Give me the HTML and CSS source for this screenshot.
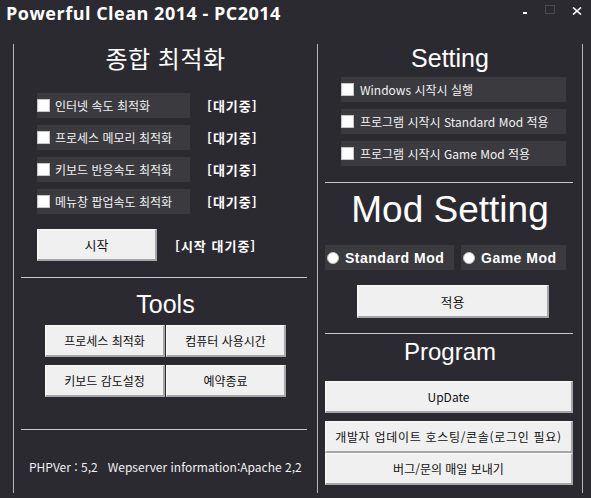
FILE: index.html
```html
<!DOCTYPE html>
<html lang="ko">
<head>
<meta charset="utf-8">
<title>Powerful Clean 2014 - PC2014</title>
<link rel="stylesheet" href="styles.css">
</head>
<body>
<div class="window">
  <header class="titlebar">
    <div class="title">Powerful Clean 2014 - PC2014</div>
    <div class="controls">
      <span class="ctl-min"></span>
      <span class="ctl-max"></span>
      <svg class="ctl-close" width="10" height="8" viewBox="0 0 10 8"><path d="M1 0.5 L9 7.5 M9 0.5 L1 7.5" stroke="#ffffff" stroke-width="1.6" fill="none"/></svg>
    </div>
  </header>
  <div class="main">
    <section class="panel panel-left">
      <h1 class="kheading">종합 최적화</h1>
      <div class="opt-list">
        <div class="opt"><div class="chk-row w-left"><span class="box"></span><span>인터넷 속도 최적화</span></div><span class="status">[대기중]</span></div>
        <div class="opt"><div class="chk-row w-left"><span class="box"></span><span>프로세스 메모리 최적화</span></div><span class="status">[대기중]</span></div>
        <div class="opt"><div class="chk-row w-left"><span class="box"></span><span>키보드 반응속도 최적화</span></div><span class="status">[대기중]</span></div>
        <div class="opt"><div class="chk-row w-left"><span class="box"></span><span>메뉴창 팝업속도 최적화</span></div><span class="status">[대기중]</span></div>
      </div>
      <div class="start-row"><div class="btn btn-start">시작</div><span class="status status-start">[시작 대기중]</span></div>
      <div class="sep sep-left"></div>
      <h2 class="heading h-tools">Tools</h2>
      <div class="tools-grid">
        <div class="btn">프로세스 최적화</div>
        <div class="btn">컴퓨터 사용시간</div>
        <div class="btn">키보드 감도설정</div>
        <div class="btn">예약종료</div>
      </div>
      <div class="sep sep-left sep-bottom"></div>
      <p class="info">PHPVer : 5,2 &nbsp;&nbsp;Wepserver information:Apache 2,2</p>
    </section>
    <section class="panel panel-right">
      <h2 class="heading h-setting">Setting</h2>
      <div class="set-list">
        <div class="chk-row w-right"><span class="box box-r"></span><span>Windows 시작시 실행</span></div>
        <div class="chk-row w-right"><span class="box box-r"></span><span>프로그램 시작시 Standard Mod 적용</span></div>
        <div class="chk-row w-right"><span class="box box-r"></span><span>프로그램 시작시 Game Mod 적용</span></div>
      </div>
      <div class="sep sep-right"></div>
      <h2 class="heading h-mod">Mod Setting</h2>
      <div class="radios">
        <div class="radio-row r-standard"><span class="dot"></span><span>Standard Mod</span></div>
        <div class="radio-row r-game"><span class="dot"></span><span>Game Mod</span></div>
      </div>
      <div class="btn btn-apply">적용</div>
      <div class="sep sep-right sep-prog"></div>
      <h2 class="heading h-prog">Program</h2>
      <div class="prog-btns">
        <div class="btn btn-wide">UpDate</div>
        <div class="btn btn-wide btn-dev">개발자 업데이트 호스팅/콘솔(로그인 필요)</div>
        <div class="btn btn-wide">버그/문의 매일 보내기</div>
      </div>
    </section>
  </div>
</div>
</body>
</html>
```
FILE: styles.css
```css
* { box-sizing: border-box; }
html, body { margin: 0; padding: 0; }
body {
  width: 591px;
  height: 498px;
  background: #2b2a30;
  font-family: "Noto Sans CJK KR", "Noto Sans", sans-serif;
  color: #f2f2f2;
  overflow: hidden;
}
.window { width: 591px; height: 498px; }

.titlebar {
  height: 44px;
  display: flex;
  align-items: flex-start;
}
.title {
  margin: 2px 0 0 6px;
  font-family: "Open Sans", "Noto Sans", sans-serif;
  font-weight: 700;
  font-size: 18px;
  line-height: 22px;
  letter-spacing: 0.5px;
  color: #ffffff;
}
.controls {
  margin-left: auto;
  margin-right: 9px;
  padding-top: 5px;
  display: flex;
  align-items: flex-start;
}
.ctl-min { width: 4px; height: 2px; background: #ffffff; margin-top: 7px; }
.ctl-max { width: 10px; height: 9px; border: 1px solid #4a4a50; margin-left: 18px; }
.ctl-close { margin-left: 17px; margin-top: 2px; display: block; }

.main { display: flex; height: 449px; }
.panel { height: 449px; }
.panel-left {
  margin-left: 13px;
  width: 304px;
  border-left: 1px solid #b4b4b4;
}
.panel-right {
  width: 266px;
  border-left: 1px solid #b4b4b4;
  border-right: 1px solid #b4b4b4;
}

.kheading {
  margin: 0;
  height: 28px;
  line-height: 28px;
  font-size: 24px;
  font-weight: 400;
  letter-spacing: 0.5px;
  text-align: center;
  color: #ffffff;
}
.heading {
  margin: 0;
  font-family: "Liberation Sans", Arial, sans-serif;
  font-weight: 400;
  text-align: center;
  color: #ffffff;
}
.h-tools { font-size: 25px; line-height: 30px; margin-top: 11px; }
.h-setting { font-size: 25px; line-height: 28px; }
.h-mod { font-size: 37px; line-height: 44px; margin-top: 5px; }
.h-prog { font-size: 24px; line-height: 28px; margin-top: 4px; }

.opt-list { margin: 21px 0 0 23px; display: flex; flex-direction: column; gap: 7px; }
.opt { display: flex; align-items: center; }
.chk-row {
  height: 25px;
  background: #3b3a3f;
  display: flex;
  align-items: center;
  font-size: 12px;
  white-space: nowrap;
}
.w-left { width: 153px; }
.w-right { width: 225px; }
.box {
  width: 13px;
  height: 13px;
  background: #ffffff;
  border: 1px solid #c4c4c4;
  margin-right: 5px;
  flex: none;
}
.box-r { margin-right: 6px; }
.status {
  margin-left: 17px;
  font-size: 13px;
  font-weight: 700;
  letter-spacing: 1px;
  color: #ffffff;
}
.status-start { margin-left: 18px; }

.btn {
  background: #f0f0f0;
  color: #111111;
  border-top: 1px solid #fbfbfb;
  border-left: 1px solid #fbfbfb;
  border-right: 2px solid #a6a6a6;
  border-bottom: 2px solid #a6a6a6;
  display: flex;
  align-items: center;
  justify-content: center;
  font-size: 12px;
  white-space: nowrap;
}
.start-row { margin: 15px 0 0 23px; display: flex; align-items: center; }
.btn-start { width: 120px; height: 32px; font-size: 13px; }

.sep { height: 1px; background: #c8c8c8; }
.sep-left { margin: 16px 0 0 7px; width: 286px; }
.sep-bottom { margin-top: 32px; }

.tools-grid {
  margin: 6px 0 0 31px;
  display: grid;
  grid-template-columns: 120px 120px;
  grid-auto-rows: 32px;
  column-gap: 1px;
  row-gap: 8px;
}

.info {
  margin: 29px 0 0 15px;
  font-size: 12px;
  line-height: 16px;
  color: #f0f0f0;
  white-space: nowrap;
}

.set-list { margin: 5px 0 0 23px; display: flex; flex-direction: column; gap: 7px; }
.sep-right { margin: 16px 0 0 7px; width: 248px; }

.radios { margin: 13px 0 0 7px; display: flex; gap: 7px; }
.radio-row {
  height: 25px;
  background: #3b3a3f;
  display: flex;
  align-items: center;
  font-family: "Liberation Sans", Arial, sans-serif;
  font-weight: 700;
  font-size: 14px;
  letter-spacing: 0.5px;
  color: #ffffff;
}
.r-standard { width: 129px; }
.r-game { width: 105px; }
.dot {
  width: 12px;
  height: 12px;
  border-radius: 50%;
  background: #ffffff;
  border: 1px solid #c4c4c4;
  margin: 0 6px 0 2px;
  flex: none;
}

.btn-apply { margin: 15px 0 0 39px; width: 192px; height: 33px; font-size: 13px; }
.sep-prog { margin-top: 15px; }

.prog-btns { margin: 15px 0 0 7px; display: flex; flex-direction: column; }
.btn-wide { width: 248px; height: 32px; }
.btn-dev { margin-top: 8px; letter-spacing: 0.7px; }
```
